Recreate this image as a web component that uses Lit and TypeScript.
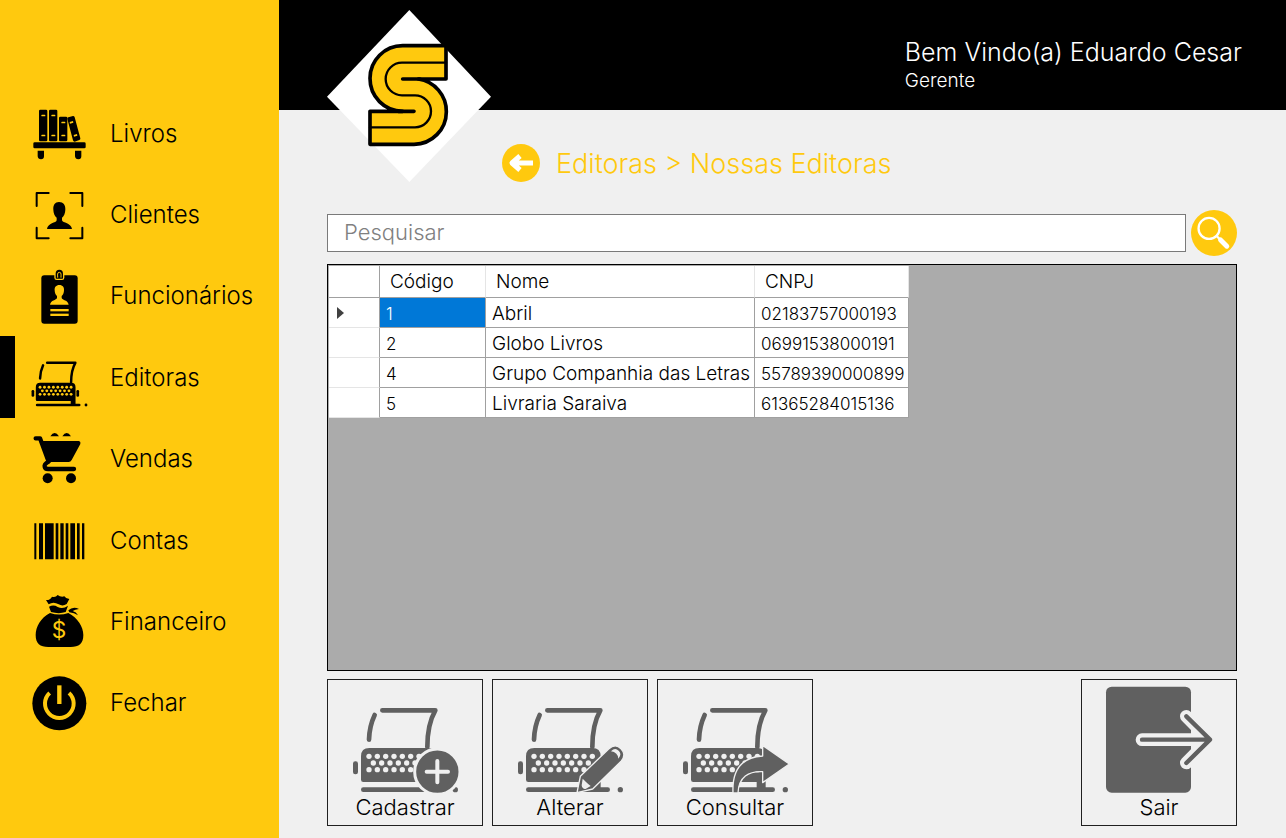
import { LitElement, html, svg, css } from "lit";
import { customElement, state } from "lit/decorators.js";
import { classMap } from "lit/directives/class-map.js";

interface Editora {
  codigo: number;
  nome: string;
  cnpj: string;
}

const EDITORAS: Editora[] = [
  { codigo: 1, nome: "Abril", cnpj: "02183757000193" },
  { codigo: 2, nome: "Globo Livros", cnpj: "06991538000191" },
  { codigo: 4, nome: "Grupo Companhia das Letras", cnpj: "55789390000899" },
  { codigo: 5, nome: "Livraria Saraiva", cnpj: "61365284015136" },
];

// Typewriter, shared by the menu and the action buttons.
const keys = [
  ...Array.from({ length: 8 }, (_, i) => [147 + i * 25, 244]),
  ...Array.from({ length: 7 }, (_, i) => [160 + i * 25, 264]),
  ...Array.from({ length: 8 }, (_, i) => [147 + i * 25, 284]),
];

const typewriter = (ink: string, paper: string) => svg`
  <g fill="none" stroke=${ink} stroke-width="14" stroke-linecap="round" stroke-linejoin="round">
    <path d="M187 106H346Q322 148 322 216"/>
    <path d="M164 120Q148 154 147 194"/>
    <path d="M130 344H368"/>
  </g>
  <path fill=${ink} d="M123 314V244q0-25 25-25H322q25 0 25 25V344H320V321H130q-7 0-7-7Z"/>
  <rect fill=${ink} x="99" y="259" width="15" height="39" rx="7"/>
  <circle fill=${ink} cx="406" cy="344" r="8"/>
  ${keys.map(([x, y]) => svg`<circle fill=${paper} cx=${x} cy=${y} r="8"/>`)}
`;

const Y = "#ffc90e";

const menuIcons = {
  livros: svg`<svg viewBox="87 38 180 180" aria-hidden="true">
    <rect x="117" y="58" width="25" height="95" rx="4"/>
    <rect x="147" y="58" width="25" height="95" rx="4"/>
    <rect x="177" y="79" width="25" height="74" rx="4"/>
    <path d="M202 86q-1-4 3-5l14-4q4 0 5 4l17 63q1 4-3 5l-14 5q-4 0-5-4Z"/>
    <rect x="100" y="156" width="157" height="18" rx="4"/>
    <path d="M113 181h19v17q0 9-9 9t-10-9ZM225 181h19v17q0 9-9 9t-10-9Z"/>
    <g fill=${Y}>
      <rect x="124" y="73" width="12" height="5" rx="2"/><rect x="124" y="133" width="12" height="5" rx="2"/>
      <rect x="154" y="73" width="12" height="5" rx="2"/><rect x="154" y="133" width="12" height="5" rx="2"/>
      <rect x="184" y="94" width="12" height="5" rx="2"/><rect x="184" y="133" width="12" height="5" rx="2"/>
      <path d="M209 95l10-3 1 5-10 3ZM221 134l10-3 1 5-10 3Z"/>
    </g></svg>`,
  clientes: svg`<svg viewBox="87 282 180 180" aria-hidden="true">
    <path fill="none" stroke="#000" stroke-width="6" stroke-linecap="round" stroke-linejoin="round"
      d="M110 348V309H146M211 309H247V348M110 413V445H146M211 445H247V413"/>
    <path d="M177 336c13 0 20 9 19 23 0 11-5 20-10 24v8c2 8 28 8 30 26H141c2-18 28-18 29-26v-8c-5-4-10-13-10-24-1-14 5-23 17-23Z"/></svg>`,
  funcionarios: svg`<svg viewBox="87 46 180 180" aria-hidden="true">
    <rect x="124" y="77" width="109" height="145" rx="9"/>
    <path fill=${Y} d="M163 75h30v9q0 7-7 7h-16q-7 0-7-7Z"/>
    <path d="M167 86V72q0-12 11-12t11 12v14q0 1-2 1h-18q-2 0-2-1Z"/>
    <path fill="none" stroke=${Y} stroke-width="3" d="M173 84V73q0-5 5-5t5 5v11"/>
    <circle cx="178" cy="76" r="3"/>
    <path fill=${Y} d="M178 106c10 0 15 7 14 16 0 8-3 14-7 17v6c2 7 19 6 21 20H150c2-14 19-13 21-20v-6c-4-3-7-9-7-17-1-9 4-16 14-16Z"/>
    <rect fill=${Y} x="151" y="178" width="55" height="7"/><rect fill=${Y} x="151" y="192" width="55" height="7"/></svg>`,
  editoras: svg`<svg viewBox="87 290 180 180" aria-hidden="true">
    <g transform="translate(42 281) scale(.532)">
      ${typewriter("#000", Y)}
      <rect x="352" y="259" width="15" height="39" rx="7"/>
    </g></svg>`,
  vendas: svg`<svg viewBox="87 24 180 180" aria-hidden="true">
    <path d="M118 63H237q6 2 4 9L215 120q-3 6-9 6H143Z"/>
    <path fill="none" stroke="#000" stroke-width="13" stroke-linecap="round" stroke-linejoin="round"
      d="M107 55H120L146 125Q132 133 134 140q1 7 10 7H222"/>
    <circle cx="143" cy="175" r="15"/><circle cx="213" cy="175" r="15"/>
    <path d="M151 49q13-20 26 0ZM187 49q13-20 26 0Z"/></svg>`,
  contas: svg`<svg viewBox="87 269 180 180" aria-hidden="true">
    <path d="M103 309h6v108h-6ZM117 309h12v108h-12ZM135 309h26v108h-26ZM167 309h8v108h-8ZM181 309h10v108h-10ZM197 309h8v108h-8ZM211 309h14v108h-14ZM231 309h8v108h-8ZM246 309h7v108h-7Z"/></svg>`,
  financeiro: svg`<svg viewBox="87 33 180 180" aria-hidden="true">
    <path d="M138 60q12 1 18-10 10 4 17-5 9 7 20 4 5 8 15 8l-8 15q-12 8-24 1-16-10-30 0Z"/>
    <path d="M147 80q14-7 26 1 16 8 31-4l-7 19q-20 7-44 0Z"/>
    <path d="M205 91q14-13 32-4-12 1-19 6 11 3 16 13-11-8-26-9Z"/>
    <path d="M150 99q28 9 55 0c28 14 45 42 45 66 0 26-13 36-38 36H145c-25 0-38-10-38-36 0-24 15-52 43-66Z"/>
    <text x="177" y="175" fill=${Y} font-size="68" font-weight="400" text-anchor="middle">$</text></svg>`,
  fechar: svg`<svg viewBox="87 276 180 180" aria-hidden="true">
    <circle cx="178" cy="370" r="81"/>
    <path fill="none" stroke=${Y} stroke-width="12" d="M149 339A43 43 0 1 0 207 339"/>
    <path stroke=${Y} stroke-width="13" d="M178 316V372"/></svg>`,
};

const MENU: { id: keyof typeof menuIcons; label: string }[] = [
  { id: "livros", label: "Livros" },
  { id: "clientes", label: "Clientes" },
  { id: "funcionarios", label: "Funcionários" },
  { id: "editoras", label: "Editoras" },
  { id: "vendas", label: "Vendas" },
  { id: "contas", label: "Contas" },
  { id: "financeiro", label: "Financeiro" },
  { id: "fechar", label: "Fechar" },
];

const INK = "#606060";
const BG = "#f0f0f0";

const badges = {
  mais: svg`
    <circle cx="352" cy="290" r="68" fill=${INK} stroke=${BG} stroke-width="9"/>
    <path stroke=${BG} stroke-width="12" stroke-linecap="round" d="M352 258V322M320 290H384"/>`,
  lapis: svg`
    <path fill=${INK} stroke=${BG} stroke-width="4" stroke-linejoin="round"
      d="M276 353L286 304L371 222Q391 204 408 221T409 258L323 342Z"/>
    <path fill=${BG} d="M378 229q12-13 23-2t-1 24q0-9-6-15t-16-7ZM293 311q6 6 10 10 6 6 14 12l-14 8q-4 2-9-1-4-4-4-9Z"/>`,
  seta: svg`
    <path fill=${INK} stroke=${BG} stroke-width="4" stroke-linejoin="round"
      d="M249 354C246 290 272 247 338 243V211L418 267L338 323V290C296 288 266 306 264 354Z"/>`,
};

@customElement("action-icon")
class ActionIcon extends LitElement {
  static properties = { badge: {} };
  declare badge: keyof typeof badges;
  static styles = css`
    :host { display: block; }
    svg { display: block; width: 110px; height: 90px; }
  `;
  render() {
    return html`<svg viewBox="90 90 330 270" aria-hidden="true">
      ${typewriter(INK, BG)}${badges[this.badge]}
    </svg>`;
  }
}

@customElement("app-root")
class AppRoot extends LitElement {
  @state() private selected = 1;

  static styles = css`
    :host {
      display: flex;
      min-height: 100vh;
      background: #f0f0f0;
      color: #000;
      font-family: "Inter", "Century Gothic", sans-serif;
      font-weight: 300;
    }
    * { box-sizing: border-box; }
    svg { display: block; }
    a { color: inherit; text-decoration: none; }
    button, input { font: inherit; color: inherit; }
    button { cursor: pointer; }

    .sidebar {
      flex: 0 0 279px;
      display: flex;
      padding: 92px 0 95px;
      background: #ffc90e;
    }
    .menu {
      flex: 1;
      display: flex;
      flex-direction: column;
      margin: 0;
      padding: 0;
      list-style: none;
    }
    .menu li { flex: 1; display: flex; }
    .link {
      flex: 1;
      display: flex;
      align-items: center;
      gap: 21px;
      padding-left: 14px;
      border-left: 15px solid transparent;
      font-size: 24px;
      line-height: 28px;
    }
    .link.active { border-left-color: #000; }
    .link svg { width: 60px; height: 60px; }
    .link span { padding-top: 2px; }

    .main { flex: 1; min-width: 0; display: flex; flex-direction: column; }
    .top {
      position: relative;
      display: flex;
      justify-content: flex-end;
      height: 110px;
      padding: 37px 44px 0 0;
      background: #000;
      color: #fff;
    }
    .logo { position: absolute; left: 48px; top: 10px; width: 164px; height: 172px; }
    .user { display: flex; flex-direction: column; gap: 2px; }
    .hello { margin: 0; font-size: 25px; line-height: 30px; }
    .role { margin: 0; font-size: 19px; line-height: 24px; }

    .content {
      flex: 1;
      display: flex;
      flex-direction: column;
      gap: 8px;
      padding: 34px 49px 12px 48px;
    }
    .crumbs {
      display: flex;
      align-items: center;
      gap: 16px;
      margin-bottom: 20px;
      padding-left: 175px;
      color: #ffc90e;
    }
    .crumbs h1 {
      margin: 0;
      padding-top: 2px;
      font-size: 27px;
      font-weight: 300;
      line-height: 36px;
    }
    .back { padding: 0; border: 0; background: none; }
    .back svg { width: 38px; height: 38px; }

    .search { display: flex; align-items: center; gap: 5px; }
    .field {
      flex: 1;
      min-width: 0;
      height: 38px;
      padding: 0 16px 2px;
      border: 1px solid #7a7a7a;
      border-radius: 0;
      background: #fff;
      font-size: 22px;
    }
    .field::placeholder { color: #808080; opacity: 1; }
    .go { padding: 0; border: 0; background: none; }
    .go svg { width: 46px; height: 46px; }

    .panel {
      flex: 1;
      padding: 1px;
      border: 1px solid #000;
      background: #ababab;
      overflow: auto;
    }
    table {
      table-layout: fixed;
      width: 580px;
      border-spacing: 0;
      background: #fff;
      font-size: 19px;
      line-height: 22px;
      text-align: left;
      white-space: nowrap;
    }
    .c-mark { width: 51px; }
    .c-cod { width: 106px; }
    .c-nome { width: 269px; }
    .c-cnpj { width: 154px; }
    thead th {
      height: 32px;
      padding: 0 10px;
      border-right: 1px solid #e5e5e5;
      border-bottom: 1px solid #a0a0a0;
      font-weight: 300;
    }
    thead .corner, .mark { border-right: 1px solid #a0a0a0; }
    tbody td {
      height: 30px;
      padding: 3px 0 0 6px;
      border-right: 1px solid #a0a0a0;
      border-bottom: 1px solid #a0a0a0;
    }
    tbody .mark { padding: 0 0 0 8px; border-bottom-color: #e5e5e5; }
    tbody .number { font-size: 17px; }
    .mark svg { width: 7px; height: 12px; }
    .cell-selected { background: #0078d7; color: #fff; }

    .actions { display: flex; gap: 9px; }
    .action {
      display: flex;
      flex-direction: column;
      align-items: center;
      justify-content: flex-end;
      width: 156px;
      height: 147px;
      padding: 0 0 6px;
      border: 1px solid #202020;
      background: #f0f0f0;
      font-size: 22px;
      line-height: 24px;
    }
    .exit { margin-left: auto; }
    .exit svg { width: 110px; height: 110px; }
  `;

  render() {
    return html`
      <nav class="sidebar" aria-label="Menu">
        <ul class="menu">
          ${MENU.map(
            (m) => html`<li>
              <a href="#${m.id}" class=${classMap({ link: true, active: m.id === "editoras" })}>
                ${menuIcons[m.id]}<span>${m.label}</span>
              </a>
            </li>`
          )}
        </ul>
      </nav>
      <div class="main">
        <header class="top">
          <svg class="logo" viewBox="51 30 492 516" aria-hidden="true">
            <path fill="#fff" d="M298 30L543 290L298 546L51 290Z"/>
            <g stroke="#000" stroke-linejoin="round" stroke-linecap="round">
              <path fill="#ffc90e" stroke-width="11"
                d="M408 137H278A98 98 0 0 0 180 235A98 98 0 0 0 278 334H180V433H312A98 98 0 0 0 409 335A98 98 0 0 0 325 237H408Z"/>
              <path fill="none" stroke-width="11" d="M278 237H330M265 334H312"/>
              <path fill="none" stroke-width="7" d="M408 188H276A49 49 0 0 0 276 286H315A48 48 0 0 1 315 382H180"/>
            </g>
          </svg>
          <div class="user">
            <p class="hello">Bem Vindo(a) Eduardo Cesar</p>
            <p class="role">Gerente</p>
          </div>
        </header>
        <main class="content">
          <div class="crumbs">
            <button class="back" type="button" aria-label="Voltar">
              <svg viewBox="0 0 38 38" aria-hidden="true">
                <circle cx="19" cy="19" r="19" fill="#ffc90e"/>
                <path fill="none" stroke="#fff" stroke-width="5" stroke-linejoin="round" d="M10 19H31M18 12L10 19L18 26"/>
              </svg>
            </button>
            <h1>Editoras &gt; Nossas Editoras</h1>
          </div>
          <form class="search" @submit=${(e: Event) => e.preventDefault()}>
            <input class="field" type="text" aria-label="Pesquisar" placeholder="Pesquisar" />
            <button class="go" type="submit" aria-label="Pesquisar">
              <svg viewBox="93 60 140 140" aria-hidden="true">
                <circle cx="163" cy="130" r="70" fill="#ffc90e"/>
                <g fill="none" stroke="#fff" stroke-linecap="round">
                  <circle cx="148" cy="116" r="32" stroke-width="7"/>
                  <path stroke-width="7" d="M171 139L182 150"/>
                  <path stroke-width="15" d="M183 151L202 170"/>
                </g>
              </svg>
            </button>
          </form>
          <section class="panel" aria-label="Editoras">
            <table>
              <colgroup>
                <col class="c-mark" /><col class="c-cod" /><col class="c-nome" /><col class="c-cnpj" />
              </colgroup>
              <thead>
                <tr>
                  <th class="corner"></th>
                  <th scope="col">Código</th>
                  <th scope="col">Nome</th>
                  <th scope="col">CNPJ</th>
                </tr>
              </thead>
              <tbody>
                ${EDITORAS.map(
                  (e) => html`<tr @click=${() => (this.selected = e.codigo)}>
                    <td class="mark">
                      ${e.codigo === this.selected
                        ? html`<svg viewBox="0 0 7 12" aria-hidden="true"><path fill="#404040" d="M0 0L7 6L0 12Z"/></svg>`
                        : ""}
                    </td>
                    <td class=${classMap({ number: true, "cell-selected": e.codigo === this.selected })}>${e.codigo}</td>
                    <td>${e.nome}</td>
                    <td class="number">${e.cnpj}</td>
                  </tr>`
                )}
              </tbody>
            </table>
          </section>
          <div class="actions">
            <button class="action" type="button"><action-icon badge="mais"></action-icon>Cadastrar</button>
            <button class="action" type="button"><action-icon badge="lapis"></action-icon>Alterar</button>
            <button class="action" type="button"><action-icon badge="seta"></action-icon>Consultar</button>
            <button class="action exit" type="button">
              <svg viewBox="102 30 330 330" aria-hidden="true">
                <rect x="108" y="35" width="255" height="318" rx="17" fill="#606060"/>
                <g fill="none" stroke-linecap="round" stroke-linejoin="round">
                  <path stroke="#f0f0f0" stroke-width="38" d="M216 194H400M349 124L418 194L349 264"/>
                  <path stroke="#606060" stroke-width="13" d="M216 194H418M349 124L420 194L349 264"/>
                </g>
              </svg>
              Sair
            </button>
          </div>
        </main>
      </div>
    `;
  }
}
